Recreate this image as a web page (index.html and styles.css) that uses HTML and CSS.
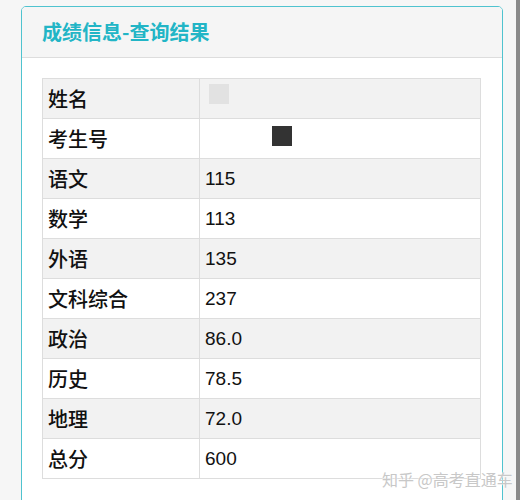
FILE: index.html
```html
<!DOCTYPE html>
<html lang="zh">
<head>
<meta charset="utf-8">
<link rel="stylesheet" href="styles.css">
</head>
<body>
<div class="frame">
  <div class="panel">
    <div class="panel-head">成绩信息-查询结果</div>
    <div class="panel-body">
      <table class="scores">
        <tr class="odd redacted"><td class="label">姓名</td><td class="value"><span class="mask light"></span></td></tr>
        <tr class="redacted"><td class="label">考生号</td><td class="value"><span class="mask dark"></span></td></tr>
        <tr class="odd"><td class="label">语文</td><td class="value">115</td></tr>
        <tr><td class="label">数学</td><td class="value">113</td></tr>
        <tr class="odd"><td class="label">外语</td><td class="value">135</td></tr>
        <tr><td class="label">文科综合</td><td class="value">237</td></tr>
        <tr class="odd"><td class="label">政治</td><td class="value">86.0</td></tr>
        <tr><td class="label">历史</td><td class="value">78.5</td></tr>
        <tr class="odd"><td class="label">地理</td><td class="value">72.0</td></tr>
        <tr><td class="label">总分</td><td class="value">600</td></tr>
      </table>
    </div>
  </div>
  <div class="watermark">知乎 @高考直通车</div>
</div>
</body>
</html>
```

FILE: styles.css
```css
html, body {
  margin: 0;
  padding: 0;
  background: #ffffff;
  font-family: "Liberation Sans", "Noto Sans CJK SC", sans-serif;
}

.frame {
  position: relative;
  width: 520px;
  height: 500px;
  box-sizing: border-box;
  padding: 6px 0 0 21px;
  background: #f6f6f6;
  border-right: 4px solid #8a8a8a;
  overflow: hidden;
}

.panel {
  width: 482px;
  height: 520px;
  box-sizing: border-box;
  border: 1px solid #4fc3cf;
  border-radius: 5px;
  background: #ffffff;
  overflow: hidden;
}

.panel-head {
  height: 51px;
  box-sizing: border-box;
  padding: 12px 0 0 20px;
  background: #f5f5f5;
  border-bottom: 1px solid #dddddd;
  color: #22b5c6;
  font-family: "Noto Sans CJK SC", sans-serif;
  font-size: 20px;
  font-weight: 700;
  line-height: 26px;
}

.panel-body {
  padding: 20px;
}

.scores {
  width: 439px;
  border-collapse: collapse;
  table-layout: fixed;
}

.scores td {
  height: 40px;
  box-sizing: border-box;
  border: 1px solid #dddddd;
  padding: 0 5px;
  vertical-align: middle;
  color: #111111;
}

.scores tr.odd td {
  background: #f2f2f2;
}

.label {
  width: 157px;
  font-family: "Noto Sans CJK SC", sans-serif;
  font-size: 20px;
  font-weight: 500;
}

.value {
  font-size: 19px;
}

.redacted .value {
  border-left-color: transparent;
  position: relative;
}

.mask {
  position: absolute;
  width: 20px;
  height: 20px;
}

.mask.light {
  left: 9px;
  top: 5px;
  background: #e2e2e2;
}

.mask.dark {
  left: 72px;
  top: 7px;
  background: #333333;
}

.watermark {
  position: absolute;
  left: 382px;
  top: 467px;
  font-family: "Noto Sans CJK SC", sans-serif;
  font-size: 16px;
  color: #c8c8c8;
  text-shadow: 0 0 2px #ffffff, 0 0 1px #ffffff;
  white-space: nowrap;
}
```
